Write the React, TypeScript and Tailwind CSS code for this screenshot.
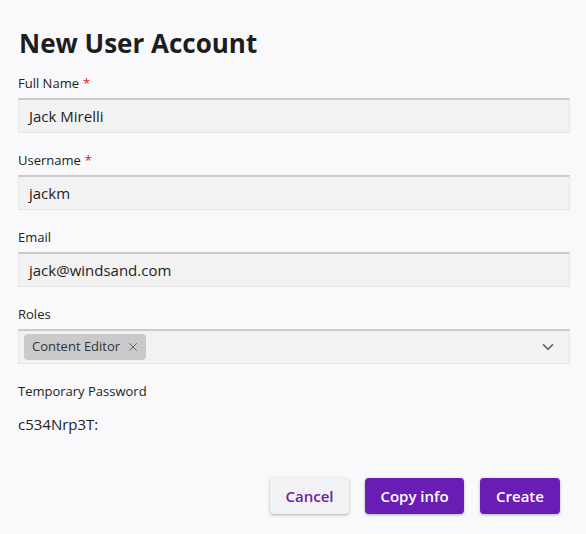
import { ChevronDown, X } from "lucide-react"

const font = { fontFamily: '"Open Sans", "Liberation Sans", sans-serif' }

function Label({ text, required }: { text: string; required?: boolean }) {
  return (
    <div className="h-[18px] text-[13px] leading-[18px] font-medium text-[#222]">
      {text}
      {required && <span className="ml-1 text-[#e3180f]">*</span>}
    </div>
  )
}

function TextField({ value }: { value: string }) {
  return (
    <div className="mt-[6px] flex h-[35px] items-center border border-[#e6e6e8] border-t-2 border-t-[#cbcbcd] bg-[#f2f2f3] pl-[10px] text-[15px] text-[#222]">
      {value}
    </div>
  )
}

export default function App() {
  return (
    <div className="min-h-[534px] w-[586px] bg-[#f9f9fb] text-[#1e1e1e]" style={font}>
      <div className="pl-[18px] pr-[16px] pt-[27px]">
        <h1 className="h-[32px] pl-[1px] text-[26px] font-bold leading-[32px] text-[#1d1d1f]">New User Account</h1>

        <div className="mt-[15px]">
          <Label text="Full Name" required />
          <TextField value="Jack Mirelli" />
        </div>

        <div className="mt-[18px]">
          <Label text="Username" required />
          <TextField value="jackm" />
        </div>

        <div className="mt-[18px]">
          <Label text="Email" />
          <TextField value="jack@windsand.com" />
        </div>

        <div className="mt-[18px]">
          <Label text="Roles" />
          <div className="mt-[6px] flex h-[35px] items-center justify-between border border-[#e6e6e8] border-t-2 border-t-[#cbcbcd] bg-[#f2f2f3] pl-[5px] pr-[12px]">
            <span className="flex h-[26px] items-center gap-[6px] rounded-[4px] bg-[#cacacd] pl-[8px] pr-[6px] text-[13px] font-medium text-[#333]">
              Content Editor
              <X size={14} strokeWidth={1.5} className="text-[#555]" />
            </span>
            <ChevronDown size={18} strokeWidth={2} className="text-[#555]" />
          </div>
        </div>

        <div className="mt-[18px]">
          <Label text="Temporary Password" />
          <div className="mt-[14px] h-[20px] text-[15px] leading-[20px] text-[#222]">c534Nrp3T:</div>
        </div>
      </div>

      <div className="mt-[44px] flex justify-end gap-[16px] pr-[26px] pb-[20px]">
        <button className="h-[36px] w-[79px] rounded-[4px] bg-[#f2f2f4] text-[15px] font-semibold text-[#6b21a8] shadow-[0_1px_3px_rgba(0,0,0,0.3)]">
          Cancel
        </button>
        <button className="h-[36px] w-[99px] rounded-[4px] bg-[#6a1db4] text-[15px] font-semibold text-white shadow-[0_1px_3px_rgba(0,0,0,0.3)]">
          Copy info
        </button>
        <button className="h-[36px] w-[80px] rounded-[4px] bg-[#6a1db4] text-[15px] font-semibold text-white shadow-[0_1px_3px_rgba(0,0,0,0.3)]">
          Create
        </button>
      </div>
    </div>
  )
}
